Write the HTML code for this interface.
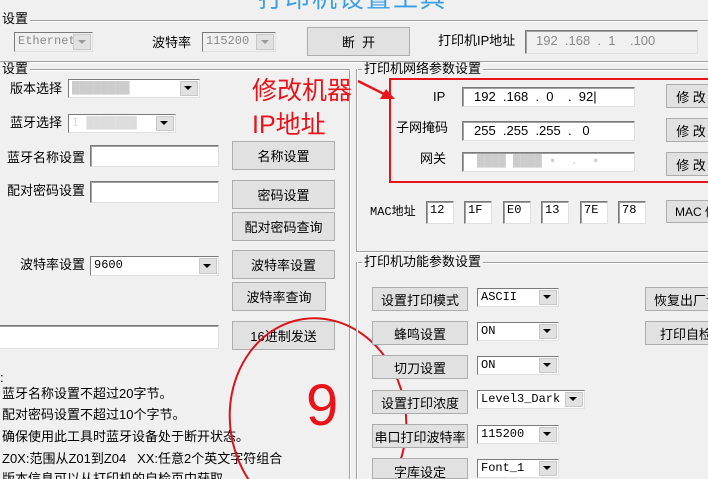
<!DOCTYPE html>
<html><head><meta charset="utf-8"><style>
*{margin:0;padding:0;box-sizing:border-box}
html,body{width:708px;height:479px;overflow:hidden}
body{background:#f0f0f0;position:relative;font-family:"Liberation Sans","Noto Sans CJK SC",sans-serif;font-size:12px;color:#000}
div,span{position:absolute}
.t{white-space:nowrap;line-height:14px}
.btn{background:#e1e1e1;border:1px solid #adadad;text-align:center;white-space:nowrap;overflow:hidden;display:flex;align-items:center;justify-content:center;font-size:13px}
.ed{background:#fff;border:1px solid #7a7a7a;border-right-color:#e0e0e0;border-bottom-color:#e0e0e0;box-shadow:inset 1px 1px 0 #a0a0a0;font-family:"Liberation Mono","Noto Sans CJK SC",monospace;font-size:12px;line-height:16px;padding-left:3px;white-space:nowrap;overflow:hidden}
.cb{background:#fff;border:1px solid #7a7a7a;border-right-color:#e0e0e0;border-bottom-color:#e0e0e0;font-family:"Liberation Mono",monospace;font-size:12px;line-height:16px;padding-left:3px;white-space:nowrap;overflow:hidden}
.cb::after{content:"";position:absolute;right:1px;top:1px;bottom:1px;width:16px;background:#e1e1e1;border:1px solid #c8c8c8}
.ar{width:0;height:0;border-left:4px solid transparent;border-right:4px solid transparent;border-top:4px solid #000;z-index:2}
.hl{height:2px;border-top:1px solid #a0a0a0;border-bottom:1px solid #fff}
.vl{width:2px;border-left:1px solid #a0a0a0;border-right:1px solid #fff}
.gl{background:#f0f0f0;padding:0 2px;font-size:13px;line-height:14px}
.dis{color:#8a8a8a;background:#f0f0f0}
.ip{font-family:"Liberation Sans",sans-serif;font-size:13px;line-height:18px}
</style></head><body>
<div class="t" style="left:258px;top:-16px;font-size:25px;line-height:30px;color:#3a9fe6;letter-spacing:2px">打印机设置工具</div>

<div class="hl" style="left:0;top:20px;width:708px"></div>
<div class="t gl" style="left:0;top:12px">设置</div>
<div class="cb dis" style="left:14px;top:32px;width:79px;height:20px">Ethernet</div><div class="ar" style="left:78px;top:40px;border-top-color:#999"></div>
<div class="t" style="left:152px;top:36px;font-size:13px">波特率</div>
<div class="cb dis" style="left:202px;top:32px;width:74px;height:20px">115200</div><div class="ar" style="left:261px;top:40px;border-top-color:#999"></div>
<div class="btn" style="left:307px;top:27px;width:103px;height:29px">断&nbsp;&nbsp;开</div>
<div class="t" style="left:438px;top:34px;font-size:13px">打印机IP地址</div>
<div class="ed dis ip" style="left:525px;top:30px;width:173px;height:24px;line-height:20px;color:#888;padding-left:10px">192&nbsp;&nbsp;.168&nbsp;&nbsp;.&nbsp;&nbsp;1&nbsp;&nbsp;&nbsp;&nbsp;.100</div>

<div class="hl" style="left:0;top:61px;width:708px"></div>

<div class="hl" style="left:0;top:69px;width:351px"></div>
<div class="vl" style="left:349px;top:69px;height:410px"></div>
<div class="t gl" style="left:0;top:62px">设置</div>

<div class="t" style="left:10px;top:82px;font-size:13px">版本选择</div>
<div class="cb" style="left:68px;top:79px;width:132px;height:19px;color:#ccc">████████</div><div class="ar" style="left:184px;top:86px"></div>
<div class="t" style="left:10px;top:116px;font-size:13px">蓝牙选择</div>
<div class="cb" style="left:68px;top:114px;width:108px;height:19px;color:#ddd">I ███████</div><div class="ar" style="left:160px;top:121px"></div>

<div class="t" style="left:7px;top:151px;font-size:13px">蓝牙名称设置</div>
<div class="ed" style="left:90px;top:145px;width:129px;height:22px"></div>
<div class="btn" style="left:232px;top:141px;width:103px;height:29px">名称设置</div>
<div class="t" style="left:7px;top:184px;font-size:13px">配对密码设置</div>
<div class="ed" style="left:90px;top:181px;width:129px;height:22px"></div>
<div class="btn" style="left:232px;top:180px;width:103px;height:29px">密码设置</div>
<div class="btn" style="left:232px;top:212px;width:103px;height:29px">配对密码查询</div>

<div class="t" style="left:20px;top:258px;font-size:13px">波特率设置</div>
<div class="cb" style="left:90px;top:256px;width:129px;height:20px">9600</div><div class="ar" style="left:203px;top:264px"></div>
<div class="btn" style="left:232px;top:250px;width:103px;height:29px">波特率设置</div>
<div class="btn" style="left:232px;top:282px;width:94px;height:29px">波特率查询</div>
<div class="ed" style="left:-2px;top:325px;width:221px;height:24px"></div>
<div class="btn" style="left:232px;top:321px;width:103px;height:29px">16进制发送</div>

<div class="t" style="left:0;top:371px;font-size:13px">:</div>
<div class="t" style="left:2px;top:387px;font-size:13px">蓝牙名称设置不超过20字节。</div>
<div class="t" style="left:2px;top:408px;font-size:13px">配对密码设置不超过10个字节。</div>
<div class="t" style="left:2px;top:430px;font-size:13px">确保使用此工具时蓝牙设备处于断开状态。</div>
<div class="t" style="left:2px;top:452px;font-size:13px">Z0X:范围从Z01到Z04&nbsp;&nbsp;&nbsp;XX:任意2个英文字符组合</div>
<div class="t" style="left:2px;top:472px;font-size:13px;height:7px;overflow:hidden">版本信息可以从打印机的自检页中获取</div>

<!-- network group -->
<div class="hl" style="left:357px;top:69px;width:351px"></div>
<div class="vl" style="left:356px;top:69px;height:184px"></div>
<div class="hl" style="left:356px;top:251px;width:352px"></div>
<div class="t gl" style="left:362px;top:62px">打印机网络参数设置</div>

<div class="t" style="left:433px;top:90px;font-size:13px">IP</div>
<div class="ed ip" style="left:462px;top:87px;width:173px;height:20px;padding-left:11px">192&nbsp;&nbsp;.168&nbsp;&nbsp;.&nbsp;&nbsp;0&nbsp;&nbsp;&nbsp;&nbsp;.&nbsp;&nbsp;92|</div>
<div class="btn" style="left:666px;top:84px;width:50px;height:24px">修&nbsp;改</div>
<div class="t" style="left:396px;top:121px;font-size:13px">子网掩码</div>
<div class="ed ip" style="left:462px;top:121px;width:173px;height:20px;padding-left:11px">255&nbsp;&nbsp;.255&nbsp;&nbsp;.255&nbsp;&nbsp;.&nbsp;&nbsp;&nbsp;0</div>
<div class="btn" style="left:666px;top:118px;width:50px;height:24px">修&nbsp;改</div>
<div class="t" style="left:420px;top:152px;font-size:13px">网关</div>
<div class="ed" style="left:462px;top:152px;width:173px;height:20px;padding-left:14px;color:#ccc">████ ████ ▪ &nbsp;.&nbsp;&nbsp;▪</div>
<div class="btn" style="left:666px;top:152px;width:50px;height:24px">修&nbsp;改</div>

<div style="left:389px;top:78px;width:330px;height:105px;border:2px solid #e8141a"></div>
<svg style="position:absolute;left:0;top:0" width="708" height="479"><line x1="358" y1="81" x2="388" y2="96" stroke="#e8141a" stroke-width="2.5"/><polygon points="395,99 380,99 386,89" fill="#e8141a"/>
<ellipse cx="318" cy="420" rx="88" ry="102" fill="none" stroke="#d9141a" stroke-width="2" transform="rotate(-8 318 420)"/></svg>
<div class="t" style="left:252px;top:76px;font-size:25px;line-height:30px;color:#e8141a">修改机器</div>
<div class="t" style="left:252px;top:110px;font-size:25px;line-height:30px;color:#e8141a">IP地址</div>
<div class="t" style="left:306px;top:376px;font-size:58px;line-height:60px;color:#e8141a">9</div>

<div class="t" style="left:370px;top:205px;font-size:12px;font-family:'Liberation Mono','Noto Sans CJK SC',monospace">MAC地址</div>
<div class="ed" style="left:426px;top:201px;width:28px;height:23px">12</div>
<div class="ed" style="left:464px;top:201px;width:28px;height:23px">1F</div>
<div class="ed" style="left:503px;top:201px;width:28px;height:23px">E0</div>
<div class="ed" style="left:541px;top:201px;width:28px;height:23px">13</div>
<div class="ed" style="left:580px;top:201px;width:28px;height:23px">7E</div>
<div class="ed" style="left:618px;top:201px;width:28px;height:23px">78</div>
<div class="btn" style="left:666px;top:200px;width:50px;height:23px;justify-content:flex-start;padding-left:8px;font-size:12px">MAC 修改</div>

<!-- function group -->
<div class="hl" style="left:357px;top:262px;width:351px"></div>
<div class="vl" style="left:356px;top:262px;height:217px"></div>
<div class="t gl" style="left:362px;top:255px">打印机功能参数设置</div>

<div class="btn" style="left:372px;top:287px;width:96px;height:24px">设置打印模式</div>
<div class="cb" style="left:477px;top:288px;width:82px;height:19px">ASCII</div><div class="ar" style="left:543px;top:295px"></div>
<div class="btn" style="left:372px;top:321px;width:96px;height:24px">蜂鸣设置</div>
<div class="cb" style="left:477px;top:322px;width:82px;height:19px">ON</div><div class="ar" style="left:543px;top:329px"></div>
<div class="btn" style="left:372px;top:355px;width:96px;height:24px">切刀设置</div>
<div class="cb" style="left:477px;top:356px;width:82px;height:19px">ON</div><div class="ar" style="left:543px;top:363px"></div>
<div class="btn" style="left:372px;top:390px;width:96px;height:24px">设置打印浓度</div>
<div class="cb" style="left:477px;top:390px;width:108px;height:19px">Level3_Dark</div><div class="ar" style="left:569px;top:397px"></div>
<div class="btn" style="left:372px;top:424px;width:96px;height:24px">串口打印波特率</div>
<div class="cb" style="left:477px;top:425px;width:82px;height:19px">115200</div><div class="ar" style="left:543px;top:432px"></div>
<div class="btn" style="left:372px;top:458px;width:96px;height:21px;align-items:flex-start;padding-top:3px">字库设定</div>
<div class="cb" style="left:477px;top:459px;width:82px;height:19px">Font_1</div><div class="ar" style="left:543px;top:466px"></div>

<div class="btn" style="left:645px;top:287px;width:80px;height:24px;justify-content:flex-start;padding-left:8px">恢复出厂设置</div>
<div class="btn" style="left:645px;top:321px;width:80px;height:24px;justify-content:flex-start;padding-left:14px">打印自检</div>
</body></html>
